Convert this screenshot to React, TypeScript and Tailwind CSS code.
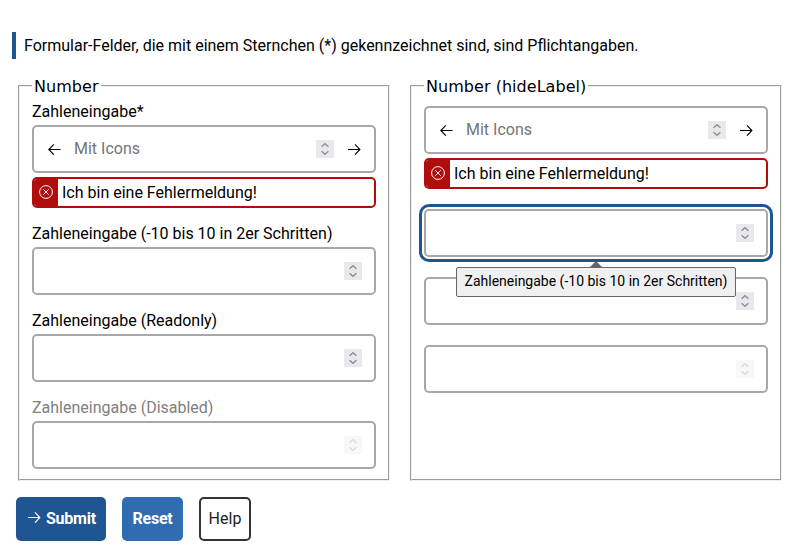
import React from "react";

type FieldProps = {
  label: string;
  hideLabel?: boolean;
  icons?: boolean;
  placeholder?: string;
  error?: string;
  disabled?: boolean;
  focused?: boolean;
};

function Arrow({ left = false, className = "" }: { left?: boolean; className?: string }) {
  return (
    <svg viewBox="0 0 13 12" className={`h-3 w-[13px] shrink-0 ${className}`} fill="none" stroke="currentColor" strokeWidth="1.1">
      {left ? <path d="M12.5 6.5H.8M5.8 1.3.8 6.5l5 5.2" /> : <path d="M0 6.5h11.7M7 1.3l4.9 5.2L7 11.7" />}
    </svg>
  );
}

function Spinner({ disabled = false }: { disabled?: boolean }) {
  return (
    <span className={`flex h-[18px] w-[18px] shrink-0 bg-[#e9e9ed] text-[#8f8f9d] ${disabled ? "opacity-30" : ""}`}>
      <svg viewBox="0 0 18 18" className="h-[18px] w-[18px]" fill="none" stroke="currentColor" strokeWidth="1.5">
        <path d="M5.6 6.8 9 3.7l3.4 3.1M5.6 11.2 9 14.3l3.4-3.1" />
      </svg>
    </span>
  );
}

function Tooltip({ text }: { text: string }) {
  return (
    <div className="absolute left-8 top-[58px] z-10 h-[30px] w-[280px] rounded-[2px] border border-[#666] bg-[#f0f0f0] text-center text-[14px] leading-[26px] whitespace-nowrap">
      <svg viewBox="0 0 14 7" className="absolute left-[132px] -top-[7px] h-[7px] w-[14px]">
        <path d="M0 7 7 0l7 7z" fill="#666" />
      </svg>
      {text}
    </div>
  );
}

function Field({ label, hideLabel, icons, placeholder, error, disabled, focused }: FieldProps) {
  return (
    <div className="relative">
      {!hideLabel && (
        <div className={`h-[19px] text-[16px] leading-[12px] ${disabled ? "text-[#808080]" : ""}`}>{label}</div>
      )}
      <div
        className={`flex h-12 items-center rounded-[5px] border-2 border-[#a8a8a8] bg-white px-3 ${
          focused ? "outline-3 outline-offset-2 outline-[#1f5592]" : ""
        }`}
      >
        {icons && <Arrow left className="ml-[1.5px] mr-[13.5px]" />}
        <span className="-mt-[2px] flex-1 text-[16px] leading-[19px] text-[#757575]">{placeholder}</span>
        <Spinner disabled={disabled} />
        {icons && <Arrow className="ml-[14px] mr-px" />}
      </div>
      {error && (
        <div className="mt-1 flex h-[31px] items-stretch overflow-hidden rounded-[5px] border-2 border-[#b10d0d] bg-white">
          <span className="flex w-6 items-center justify-center bg-[#b10d0d] pb-px pr-px text-white">
            <svg viewBox="0 0 14 14" className="h-[14px] w-[14px]" fill="none" stroke="currentColor" strokeWidth="1">
              <circle cx="7" cy="7" r="6.4" />
              <path d="m4.3 4.3 5.4 5.4m0-5.4L4.3 9.7" />
            </svg>
          </span>
          <span className="pl-1 text-[16px] leading-[27px]">{error}</span>
        </div>
      )}
      {focused && <Tooltip text={label} />}
    </div>
  );
}

function Group({ title, hideLabel = false }: { title: string; hideLabel?: boolean }) {
  const step = "Zahleneingabe (-10 bis 10 in 2er Schritten)";
  return (
    <fieldset className="h-[405px] w-[372px] border-2 border-[#f0f0f0] px-3 [border-style:groove]">
      <legend className="h-[19px] px-[2px] font-['DejaVu_Sans',sans-serif] text-[16px] leading-[21px] tracking-[0.04px]">{title}</legend>
      <div className="flex flex-col gap-5 pt-[11px]">
        <Field label="Zahleneingabe*" hideLabel={hideLabel} icons placeholder="Mit Icons" error="Ich bin eine Fehlermeldung!" />
        <Field label={step} hideLabel={hideLabel} focused={hideLabel} />
        <Field label="Zahleneingabe (Readonly)" hideLabel={hideLabel} />
        <Field label="Zahleneingabe (Disabled)" hideLabel={hideLabel} disabled />
      </div>
    </fieldset>
  );
}

export default function App() {
  return (
    <main className="h-[557px] w-[800px] overflow-hidden bg-white pt-8 font-[Roboto,sans-serif] text-[16px] text-black">
      <p className="ml-3 h-[27px] border-l-4 border-[#1f5592] pl-2 leading-[27px]">
        Formular-Felder, die mit einem Sternchen (*) gekennzeichnet sind, sind Pflichtangaben.
      </p>
      <div className="ml-[18px] mt-[17px] flex gap-5">
        <Group title="Number" />
        <Group title="Number (hideLabel)" hideLabel />
      </div>
      <div className="ml-4 mt-4 flex gap-4">
        <button className="flex h-11 w-[90px] items-center gap-[5px] rounded-[5px] bg-[#1f5592] pl-3 font-bold tracking-[-0.25px] text-white">
          <Arrow className="-mt-[5px]" />
          <span>Submit</span>
        </button>
        <button className="h-11 w-[61px] rounded-[5px] bg-[#316cb0] font-bold tracking-[-0.2px] text-white">Reset</button>
        <button className="h-11 w-[52px] rounded-[5px] border-2 border-[#333] text-[#222]">Help</button>
      </div>
    </main>
  );
}
